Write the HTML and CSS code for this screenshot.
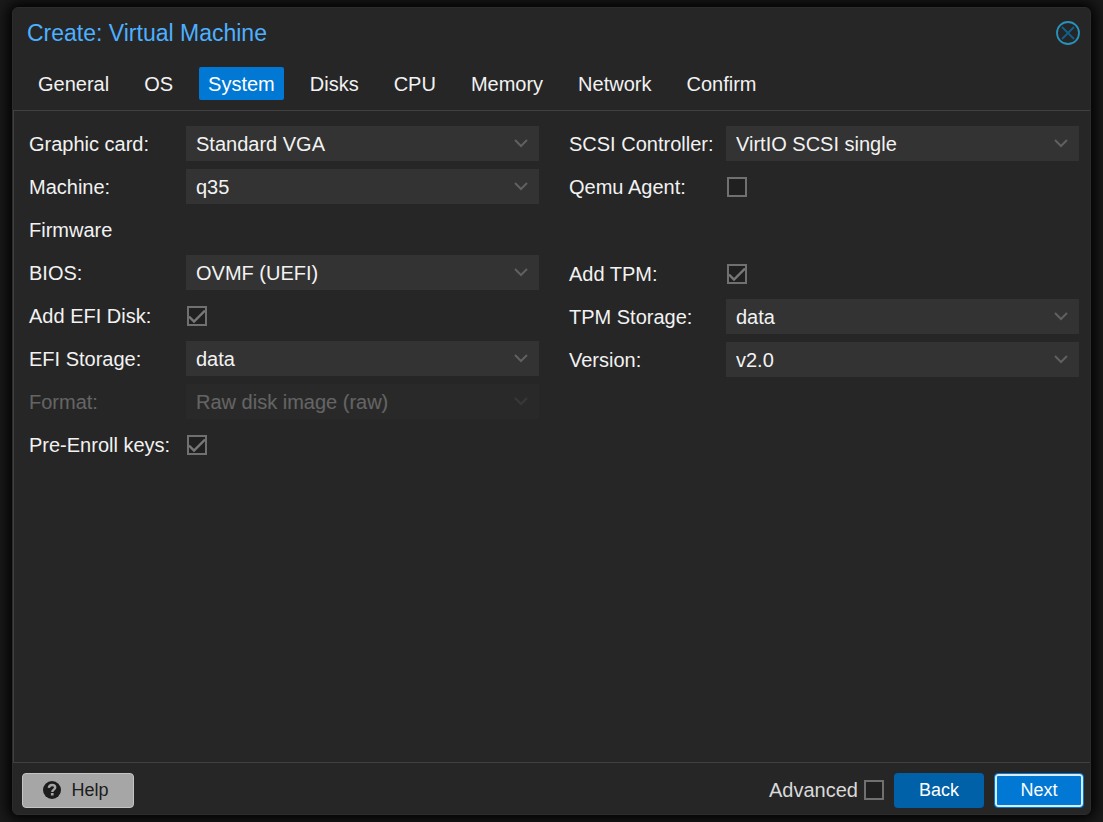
FILE: index.html
```html
<!DOCTYPE html>
<html lang="en">
<head>
  <meta charset="UTF-8">
  <meta name="viewport" content="width=device-width, initial-scale=1.0">
  <title>Create: Virtual Machine</title>
  <link rel="stylesheet" href="styles.css">
</head>
<body>
  <form class="window">
    <header class="window-header">
      <h1>Create: Virtual Machine</h1>
      <button type="button" class="close" aria-label="Close">
        <svg viewBox="0 0 24 24" width="24" height="24" fill="none">
          <circle cx="12" cy="12" r="11" stroke="#2792be" stroke-width="1.8"/>
          <path d="M6 6l12 12M18 6l-12 12" stroke="#125f8c" stroke-width="1.8"/>
        </svg>
      </button>
    </header>

    <nav class="tabs">
      <button type="button">General</button>
      <button type="button">OS</button>
      <button type="button" class="active">System</button>
      <button type="button">Disks</button>
      <button type="button">CPU</button>
      <button type="button">Memory</button>
      <button type="button">Network</button>
      <button type="button">Confirm</button>
    </nav>

    <main class="panel">
      <div class="column">
        <div class="field">
          <label for="vga">Graphic card:</label>
          <select id="vga"><option>Standard VGA</option></select>
        </div>
        <div class="field">
          <label for="machine">Machine:</label>
          <select id="machine"><option>q35</option></select>
        </div>
        <div class="field"><span>Firmware</span></div>
        <div class="field">
          <label for="bios">BIOS:</label>
          <select id="bios"><option>OVMF (UEFI)</option></select>
        </div>
        <div class="field">
          <label for="efidisk">Add EFI Disk:</label>
          <input type="checkbox" id="efidisk" checked>
        </div>
        <div class="field">
          <label for="efistorage">EFI Storage:</label>
          <select id="efistorage"><option>data</option></select>
        </div>
        <div class="field disabled">
          <label for="format">Format:</label>
          <select id="format" disabled><option>Raw disk image (raw)</option></select>
        </div>
        <div class="field">
          <label for="keys">Pre-Enroll keys:</label>
          <input type="checkbox" id="keys" checked>
        </div>
      </div>

      <div class="column">
        <div class="field">
          <label for="scsi">SCSI Controller:</label>
          <select id="scsi"><option>VirtIO SCSI single</option></select>
        </div>
        <div class="field">
          <label for="agent">Qemu Agent:</label>
          <input type="checkbox" id="agent">
        </div>
        <div class="spacer"></div>
        <div class="field">
          <label for="tpm">Add TPM:</label>
          <input type="checkbox" id="tpm" checked>
        </div>
        <div class="field">
          <label for="tpmstorage">TPM Storage:</label>
          <select id="tpmstorage"><option>data</option></select>
        </div>
        <div class="field">
          <label for="version">Version:</label>
          <select id="version"><option>v2.0</option></select>
        </div>
      </div>
    </main>

    <footer class="toolbar">
      <button type="button" class="btn help">
        <svg viewBox="0 0 18 18" width="18" height="18">
          <circle cx="9" cy="9" r="9" fill="#1c1c1c"/>
          <path d="M5.800 6.900C6.100 4.900 7.300 4 9.100 4c1.800 0 3.100 1 3.100 2.500 0 2.100-2.900 2.100-2.900 4.400" fill="none" stroke="#a6a6a6" stroke-width="2.400"/>
          <rect x="7.900" y="12" width="2.700" height="2.500" fill="#a6a6a6"/>
        </svg>
        Help
      </button>
      <label class="advanced" for="advanced">Advanced</label>
      <input type="checkbox" id="advanced">
      <button type="button" class="btn back">Back</button>
      <button type="button" class="btn next">Next</button>
    </footer>
  </form>
</body>
</html>
```

FILE: styles.css
```css
* {
  box-sizing: border-box;
}

body {
  margin: 0;
  min-height: 100vh;
  padding: 7px 12px;
  display: flex;
  background: #1a1a1a;
  color: #f2f2f2;
  font-family: "Liberation Sans", Arial, sans-serif;
  font-size: 20px;
  line-height: 24px;
  overflow: hidden;
}

button, select, input {
  margin: 0;
  font: inherit;
  color: inherit;
}

.window {
  flex: 1;
  display: flex;
  flex-direction: column;
  border: 1px solid #2c2c2c;
  border-radius: 6px;
  background: #262626;
  box-shadow: 0 0 14px 4px #000;
}

.window-header {
  display: flex;
  justify-content: space-between;
  align-items: center;
  height: 50px;
  padding: 0 10px 0 14px;
}

h1 {
  margin: 0;
  color: #4db0ff;
  font-size: 23px;
  font-weight: normal;
}

.close {
  display: flex;
  padding: 0;
  border: none;
  background: none;
}

.tabs {
  display: flex;
  gap: 17px;
  padding: 9px 16px 10px;
  border-bottom: 1px solid #404040;
}

.tabs button {
  height: 33px;
  padding: 0 9px;
  border: none;
  border-radius: 2px;
  background: none;
}

.tabs .active {
  background: #0078d4;
  color: #fff;
}

.panel {
  flex: 1;
  display: grid;
  grid-template-columns: 1fr 1fr;
  align-items: start;
  gap: 30px;
  padding: 15px 11px 15px 15px;
  border-left: 1px solid #404040;
  border-bottom: 1px solid #404040;
}

.column {
  display: grid;
  gap: 8px;
}

.field {
  display: grid;
  grid-template-columns: 157px 1fr;
  align-items: center;
  height: 35px;
}

.spacer {
  height: 36px;
}

select {
  appearance: none;
  height: 35px;
  padding: 0 34px 0 10px;
  border: none;
  border-radius: 0;
  background: #333 url("data:image/svg+xml,%3Csvg xmlns='http://www.w3.org/2000/svg' width='14' height='10' fill='none' stroke='%23606060' stroke-width='2'%3E%3Cpath d='M1 1l6 6 6-6'/%3E%3C/svg%3E") no-repeat right 11px center;
}

select:disabled {
  opacity: 1;
}

.disabled {
  opacity: 0.3;
}

input[type="checkbox"] {
  appearance: none;
  width: 20px;
  height: 20px;
  margin-left: 1px;
  border: 2px solid #707070;
  background: #202020;
}

input[type="checkbox"]:checked {
  background: #202020 url("data:image/svg+xml,%3Csvg xmlns='http://www.w3.org/2000/svg' width='16' height='16' fill='none' stroke='%23777' stroke-width='2.4'%3E%3Cpath d='M0 8.500l5 5L16 2.500'/%3E%3C/svg%3E") no-repeat center;
}

.toolbar {
  display: flex;
  align-items: center;
  gap: 10px;
  height: 51px;
  padding: 3px 6px 0 9px;
}

.advanced {
  margin-left: auto;
  margin-right: -5px;
  color: #d9d9d9;
}

.btn {
  display: flex;
  align-items: center;
  justify-content: center;
  width: 90px;
  height: 35px;
  padding: 0;
  border: none;
  border-radius: 4px;
  color: #fff;
  font-size: 18px;
}

.help {
  gap: 10px;
  width: 112px;
  padding-right: 4px;
  border: 1px solid #c4c4c4;
  background: #a6a6a6;
  color: #1c1c1c;
}

.back {
  background: #0060a8;
}

.next {
  border: 1px solid #0078d4;
  background: #0078d4;
  box-shadow: inset 0 0 0 2px #d9ecfb;
}
```
